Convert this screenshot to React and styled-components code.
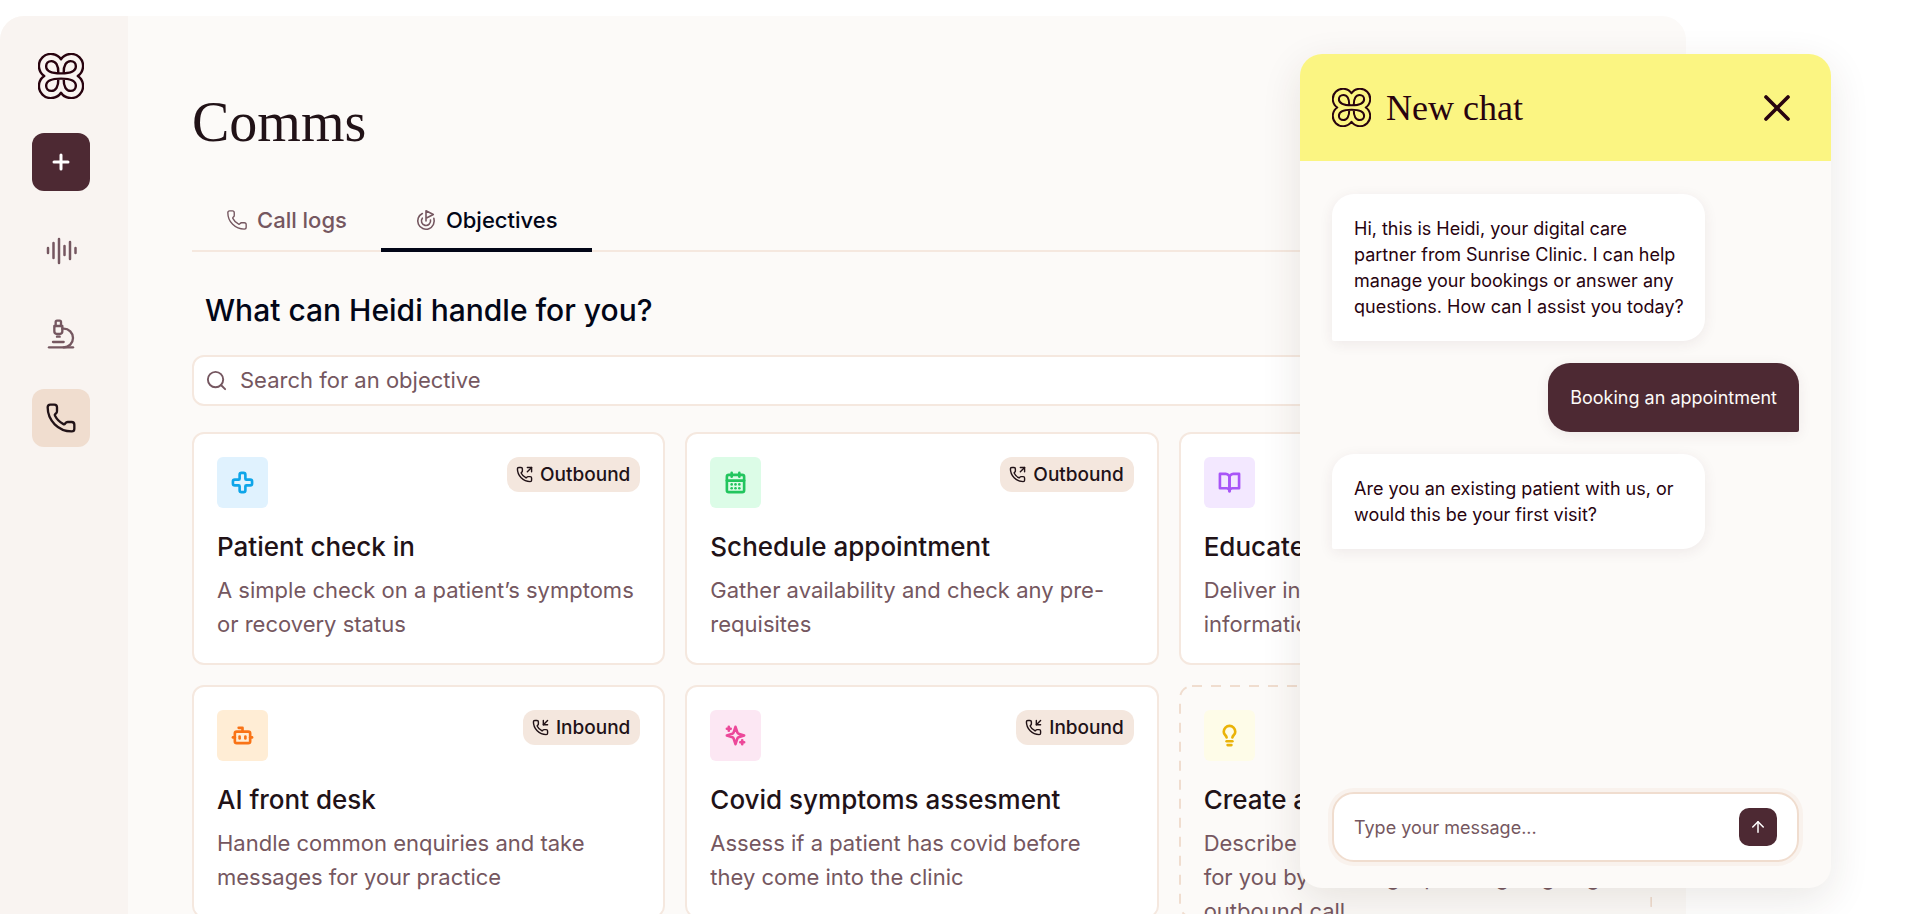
import { useState } from "react";
import styled, { createGlobalStyle, css } from "styled-components";
import {
  Plus,
  Microscope,
  Phone,
  Goal,
  Search,
  PhoneOutgoing,
  PhoneIncoming,
  Cross,
  CalendarDays,
  Bot,
  Lightbulb,
  X,
  ArrowUp,
} from "lucide-react";

const colors = {
  text: "#211217",
  ink: "#020617",
  wine: "#28030f",
  muted: "#755760",
  plum: "#4d2933",
  sand: "#f0ddcf",
  border: "#f5e8df",
  tag: "#f4e7de",
  page: "#fcfaf8",
  rail: "#f9f4f1",
  yellow: "#fbf582",
};

const fonts = {
  heading: `"Liberation Serif", "Times New Roman", serif`,
  body: `Inter, "Open Sans", sans-serif`,
};

const objectives = [
  {
    title: "Patient check in",
    description: "A simple check on a patient’s symptoms or recovery status",
    icon: Cross,
    color: "#0ea5e9",
    background: "#e0f2fe",
    direction: "Outbound",
  },
  {
    title: "Schedule appointment",
    description: "Gather availability and check any pre-requisites",
    icon: CalendarDays,
    color: "#22c55e",
    background: "#dcfce7",
    direction: "Outbound",
  },
  {
    title: "Educate patient",
    description: "Deliver instructions, guidance and information to patients",
    icon: BookIcon,
    color: "#a855f7",
    background: "#f3e8ff",
    direction: "Outbound",
  },
  {
    title: "AI front desk",
    description: "Handle common enquiries and take messages for your practice",
    icon: Bot,
    color: "#f97316",
    background: "#ffedd5",
    direction: "Inbound",
  },
  {
    title: "Covid symptoms assesment",
    description: "Assess if a patient has covid before they come into the clinic",
    icon: SparklesIcon,
    color: "#ec4899",
    background: "#fce7f3",
    direction: "Inbound",
  },
  {
    title: "Create a new objective",
    description:
      "Describe what you want Heidi to handle for you by creating a pending ongoing outbound call",
    icon: Lightbulb,
    color: "#eab308",
    background: "#fefce8",
    isDraft: true,
  },
];

const messages = [
  {
    id: 1,
    text: "Hi, this is Heidi, your digital care partner from Sunrise Clinic. I can help manage your bookings or answer any questions. How can I assist you today?",
  },
  { id: 2, text: "Booking an appointment", isOwn: true },
  {
    id: 3,
    text: "Are you an existing patient with us, or would this be your first visit?",
  },
];

function HeidiLogo({ size }) {
  return (
    <svg
      width={size}
      height={size}
      viewBox="0 0 48 48"
      fill="none"
      stroke={colors.wine}
      strokeWidth="2.5"
      strokeLinejoin="round"
      aria-hidden="true"
    >
      <path d="M24 6.5A12.6 12.6 0 1 0 6.5 24A12.6 12.6 0 1 0 24 41.5A12.6 12.6 0 1 0 41.5 24A12.6 12.6 0 1 0 24 6.5Z" />
      <path d="M21.2 20.8C21.4 13 18.5 8.5 14 8.5C10.5 8.5 8.5 11 8.5 13.8C8.5 18.5 13 21.3 24 21.3C35 21.3 39.5 18.5 39.5 13.8C39.5 11 37.5 8.5 34 8.5C29.5 8.5 26.6 13 26.8 20.8" />
      <path d="M21.2 27.2C21.4 35 18.5 39.5 14 39.5C10.5 39.5 8.5 37 8.5 34.2C8.5 29.5 13 26.7 24 26.7C35 26.7 39.5 29.5 39.5 34.2C39.5 37 37.5 39.5 34 39.5C29.5 39.5 26.6 35 26.8 27.2" />
    </svg>
  );
}

function WaveIcon() {
  return (
    <svg
      width="32"
      height="32"
      viewBox="0 0 32 32"
      stroke="currentColor"
      strokeWidth="2.5"
      strokeLinecap="round"
      aria-hidden="true"
    >
      <path d="M3 14V19M8.500 9V24M14 5V29M19.500 12V21M25 8V25M30.500 14V19" />
    </svg>
  );
}

function BookIcon({ size, strokeWidth }) {
  return (
    <StyledLineIcon
      width={size}
      height={size}
      viewBox="0 0 24 24"
      strokeWidth={strokeWidth}
      aria-hidden="true"
    >
      <path d="M2 3h6a4 4 0 0 1 4 4v14a3 3 0 0 0-3-3H2z" />
      <path d="M22 3h-6a4 4 0 0 0-4 4v14a3 3 0 0 1 3-3h7z" />
    </StyledLineIcon>
  );
}

function SparklesIcon({ size, strokeWidth }) {
  return (
    <StyledLineIcon
      width={size}
      height={size}
      viewBox="0 0 24 24"
      strokeWidth={strokeWidth}
      aria-hidden="true"
    >
      <path d="m12 3-1.912 5.813a2 2 0 0 1-1.275 1.275L3 12l5.813 1.912a2 2 0 0 1 1.275 1.275L12 21l1.912-5.813a2 2 0 0 1 1.275-1.275L21 12l-5.813-1.912a2 2 0 0 1-1.275-1.275L12 3Z" />
      <path d="M5 3v4M3 5h4M19 17v4M17 19h4" />
    </StyledLineIcon>
  );
}

export default function App() {
  const [search, setSearch] = useState("");
  const [draft, setDraft] = useState("");

  function handleSubmit(event) {
    event.preventDefault();
    setDraft("");
  }

  return (
    <StyledPage>
      <GlobalStyle />
      <StyledShell>
        <StyledSidebar aria-label="Main">
          <HeidiLogo size={46} />
          <StyledNavButton type="button" $variant="primary" aria-label="New">
            <Plus size={24} strokeWidth={3} />
          </StyledNavButton>
          <StyledNavButton type="button" aria-label="Sessions">
            <WaveIcon />
          </StyledNavButton>
          <StyledNavButton type="button" aria-label="Research">
            <Microscope size={32} strokeWidth={1.75} />
          </StyledNavButton>
          <StyledNavButton type="button" $variant="active" aria-label="Comms">
            <Phone size={32} strokeWidth={1.75} />
          </StyledNavButton>
        </StyledSidebar>
        <StyledMain>
          <StyledPageTitle>Comms</StyledPageTitle>
          <StyledTabs role="tablist">
            <StyledTab type="button" role="tab" aria-selected="false">
              <Phone size={22} strokeWidth={1.5} color={colors.muted} />
              Call logs
            </StyledTab>
            <StyledTab type="button" role="tab" aria-selected="true" $isActive>
              <Goal size={22} strokeWidth={1.75} color={colors.muted} />
              Objectives
            </StyledTab>
          </StyledTabs>
          <StyledSectionTitle>What can Heidi handle for you?</StyledSectionTitle>
          <StyledSearch>
            <Search size={23} strokeWidth={2} />
            <StyledSearchInput
              type="text"
              aria-label="Search for an objective"
              placeholder="Search for an objective"
              value={search}
              onChange={(event) => setSearch(event.target.value)}
            />
          </StyledSearch>
          <StyledGrid>
            {objectives.map((objective) => (
              <ObjectiveCard key={objective.title} {...objective} />
            ))}
          </StyledGrid>
        </StyledMain>
      </StyledShell>
      <StyledChat aria-label="New chat">
        <StyledChatHeader>
          <HeidiLogo size={39} />
          <StyledChatTitle>New chat</StyledChatTitle>
          <StyledCloseButton type="button" aria-label="Close">
            <X size={44} strokeWidth={2} />
          </StyledCloseButton>
        </StyledChatHeader>
        <StyledMessages>
          {messages.map((message) => (
            <StyledMessage key={message.id} $isOwn={message.isOwn}>
              {message.text}
            </StyledMessage>
          ))}
        </StyledMessages>
        <StyledComposer onSubmit={handleSubmit}>
          <StyledComposerInput
            type="text"
            aria-label="Message"
            placeholder="Type your message..."
            value={draft}
            onChange={(event) => setDraft(event.target.value)}
          />
          <StyledSendButton type="submit" aria-label="Send">
            <ArrowUp size={18} strokeWidth={2} />
          </StyledSendButton>
        </StyledComposer>
      </StyledChat>
    </StyledPage>
  );
}

function ObjectiveCard({
  title,
  description,
  icon: Icon,
  color,
  background,
  direction,
  isDraft,
}) {
  const DirectionIcon = direction === "Inbound" ? PhoneIncoming : PhoneOutgoing;

  return (
    <StyledCard $isDraft={isDraft}>
      {isDraft && (
        <StyledDashes aria-hidden="true">
          <rect x="1" y="1" rx="12" />
        </StyledDashes>
      )}
      <StyledCardTop>
        <StyledCardIcon $color={color} $background={background}>
          <Icon size={23} strokeWidth={2.75} />
        </StyledCardIcon>
        {direction && (
          <StyledTag>
            <DirectionIcon size={17} strokeWidth={2} />
            {direction}
          </StyledTag>
        )}
      </StyledCardTop>
      <StyledCardTitle>{title}</StyledCardTitle>
      <StyledCardText>{description}</StyledCardText>
    </StyledCard>
  );
}

const GlobalStyle = createGlobalStyle`
  * {
    box-sizing: border-box;
  }

  body {
    margin: 0;
    background-color: #fff;
    color: ${colors.text};
    font-family: ${fonts.body};
  }

  button,
  input {
    font: inherit;
    color: inherit;
  }

  button {
    padding: 0;
    border: none;
    background: none;
    cursor: pointer;
  }
`;

const StyledPage = styled.div`
  position: relative;
  height: 100vh;
  overflow: hidden;
  padding: 16px 221px 0 0;
`;

const StyledShell = styled.div`
  display: flex;
  min-height: 100%;
  border-radius: 24px 24px 0 0;
  background-color: ${colors.page};
  overflow: hidden;
`;

const StyledSidebar = styled.nav`
  display: flex;
  flex-direction: column;
  align-items: center;
  flex: none;
  width: 128px;
  padding: 37px 6px 0 0;
  gap: 26px;
  background-color: ${colors.rail};

  & > svg {
    margin-bottom: 8px;
  }
`;

const StyledNavButton = styled.button`
  display: flex;
  align-items: center;
  justify-content: center;
  width: 58px;
  height: 58px;
  border-radius: 12px;
  color: ${colors.muted};

  ${({ $variant }) =>
    $variant === "primary" &&
    css`
      margin-bottom: 4px;
      background-color: ${colors.plum};
      color: #fff;
    `}

  ${({ $variant }) =>
    $variant === "active" &&
    css`
      background-color: ${colors.sand};
      color: ${colors.text};
    `}
`;

const StyledLineIcon = styled.svg`
  fill: none;
  stroke: currentColor;
  stroke-linecap: round;
  stroke-linejoin: round;
`;

const StyledMain = styled.main`
  flex: 1;
  min-width: 0;
  padding: 74px 34px 0 64px;
`;

const StyledPageTitle = styled.h1`
  margin: 0 0 38px;
  font-family: ${fonts.heading};
  font-size: 56px;
  font-weight: 400;
  line-height: 64px;
`;

const StyledTabs = styled.div`
  display: flex;
  border-bottom: 2px solid ${colors.border};
`;

const StyledTab = styled.button`
  display: flex;
  align-items: center;
  gap: 9px;
  height: 60px;
  margin-bottom: -2px;
  padding: 0 34px;
  border-bottom: 4px solid
    ${({ $isActive }) => ($isActive ? colors.ink : "transparent")};
  color: ${({ $isActive }) => ($isActive ? colors.ink : colors.muted)};
  font-size: 22px;
  font-weight: 500;
`;

const StyledSectionTitle = styled.h2`
  margin: 36px 0 23px 13px;
  color: ${colors.ink};
  font-size: 30px;
  font-weight: 500;
  line-height: 44px;
`;

const StyledSearch = styled.div`
  display: flex;
  align-items: center;
  gap: 12px;
  height: 51px;
  margin-bottom: 26px;
  padding: 0 11px;
  border: 2px solid ${colors.border};
  border-radius: 12px;
  background-color: #fff;
  color: ${colors.muted};
`;

const StyledSearchInput = styled.input`
  flex: 1;
  min-width: 0;
  padding: 0 0 2px;
  border: none;
  outline: none;
  background: none;
  font-size: 22px;

  &::placeholder {
    color: ${colors.muted};
    opacity: 1;
  }
`;

const StyledGrid = styled.div`
  display: grid;
  grid-template-columns: repeat(3, minmax(0, 1fr));
  grid-auto-rows: 233px;
  gap: 20px;
`;

const StyledCard = styled.article`
  position: relative;
  padding: 23px 23px 22px;
  border: 2px solid ${({ $isDraft }) => ($isDraft ? "transparent" : colors.border)};
  border-radius: 12px;
  background-color: ${({ $isDraft }) => ($isDraft ? "transparent" : "#fff")};
`;

const StyledDashes = styled.svg`
  position: absolute;
  inset: -2px;
  width: calc(100% + 4px);
  height: calc(100% + 4px);

  rect {
    width: calc(100% - 2px);
    height: calc(100% - 2px);
    fill: none;
    stroke: ${colors.sand};
    stroke-width: 2px;
    stroke-dasharray: 10px 9px;
  }
`;

const StyledCardTop = styled.div`
  display: flex;
  align-items: flex-start;
  justify-content: space-between;
`;

const StyledCardIcon = styled.div`
  display: flex;
  align-items: center;
  justify-content: center;
  width: 51px;
  height: 51px;
  border-radius: 6px;
  background-color: ${({ $background }) => $background};
  color: ${({ $color }) => $color};
`;

const StyledTag = styled.span`
  display: flex;
  align-items: center;
  gap: 7px;
  height: 35px;
  padding: 0 10px 0 9px;
  border-radius: 12px;
  background-color: ${colors.tag};
  font-size: 19px;
  font-weight: 500;
`;

const StyledCardTitle = styled.h3`
  margin: 21px 0 8px;
  font-size: 26px;
  font-weight: 500;
  line-height: 36px;
`;

const StyledCardText = styled.p`
  margin: 0;
  padding-right: 6px;
  color: ${colors.muted};
  font-size: 22px;
  line-height: 34px;
`;

const StyledChat = styled.aside`
  position: absolute;
  top: 54px;
  right: 76px;
  bottom: 26px;
  display: flex;
  flex-direction: column;
  width: 531px;
  border-radius: 22px;
  background-color: ${colors.page};
  box-shadow: 0 12px 40px rgba(64, 48, 24, 0.11);
  overflow: hidden;
`;

const StyledChatHeader = styled.header`
  display: flex;
  align-items: center;
  gap: 15px;
  height: 107px;
  padding: 0 32px;
  background-color: ${colors.yellow};
`;

const StyledChatTitle = styled.h2`
  flex: 1;
  margin: 0;
  color: ${colors.wine};
  font-family: ${fonts.heading};
  font-size: 36px;
  font-weight: 400;
  line-height: 44px;
`;

const StyledCloseButton = styled.button`
  display: flex;
  color: ${colors.wine};
`;

const StyledMessages = styled.div`
  display: flex;
  flex-direction: column;
  align-items: flex-start;
  flex: 1;
  gap: 22px;
  padding: 33px 32px;
`;

const StyledMessage = styled.p`
  align-self: ${({ $isOwn }) => ($isOwn ? "flex-end" : "flex-start")};
  max-width: 373px;
  margin: 0;
  padding: 22px ${({ $isOwn }) => ($isOwn ? "22px" : "20px")} 21px 22px;
  border-radius: ${({ $isOwn }) =>
    $isOwn ? "22px 22px 2px 22px" : "22px 22px 22px 2px"};
  background-color: ${({ $isOwn }) => ($isOwn ? colors.plum : "#fff")};
  box-shadow: 0 3px 14px rgba(77, 41, 51, 0.08);
  color: ${({ $isOwn }) => ($isOwn ? colors.page : colors.wine)};
  font-size: 18px;
  line-height: 26px;
`;

const StyledComposer = styled.form`
  display: flex;
  align-items: center;
  gap: 16px;
  height: 70px;
  margin: 0 32px 26px;
  padding: 0 20px;
  border: 2px solid ${colors.sand};
  border-radius: 22px;
  background-color: #fff;
  box-shadow: 0 0 0 4px #f9f2ed;
`;

const StyledComposerInput = styled.input`
  flex: 1;
  min-width: 0;
  padding: 0;
  border: none;
  outline: none;
  background: none;
  font-size: 18px;

  &::placeholder {
    color: ${colors.muted};
    opacity: 1;
  }
`;

const StyledSendButton = styled.button`
  display: flex;
  align-items: center;
  justify-content: center;
  width: 38px;
  height: 38px;
  border-radius: 10px;
  background-color: ${colors.plum};
  color: #fff;
`;
